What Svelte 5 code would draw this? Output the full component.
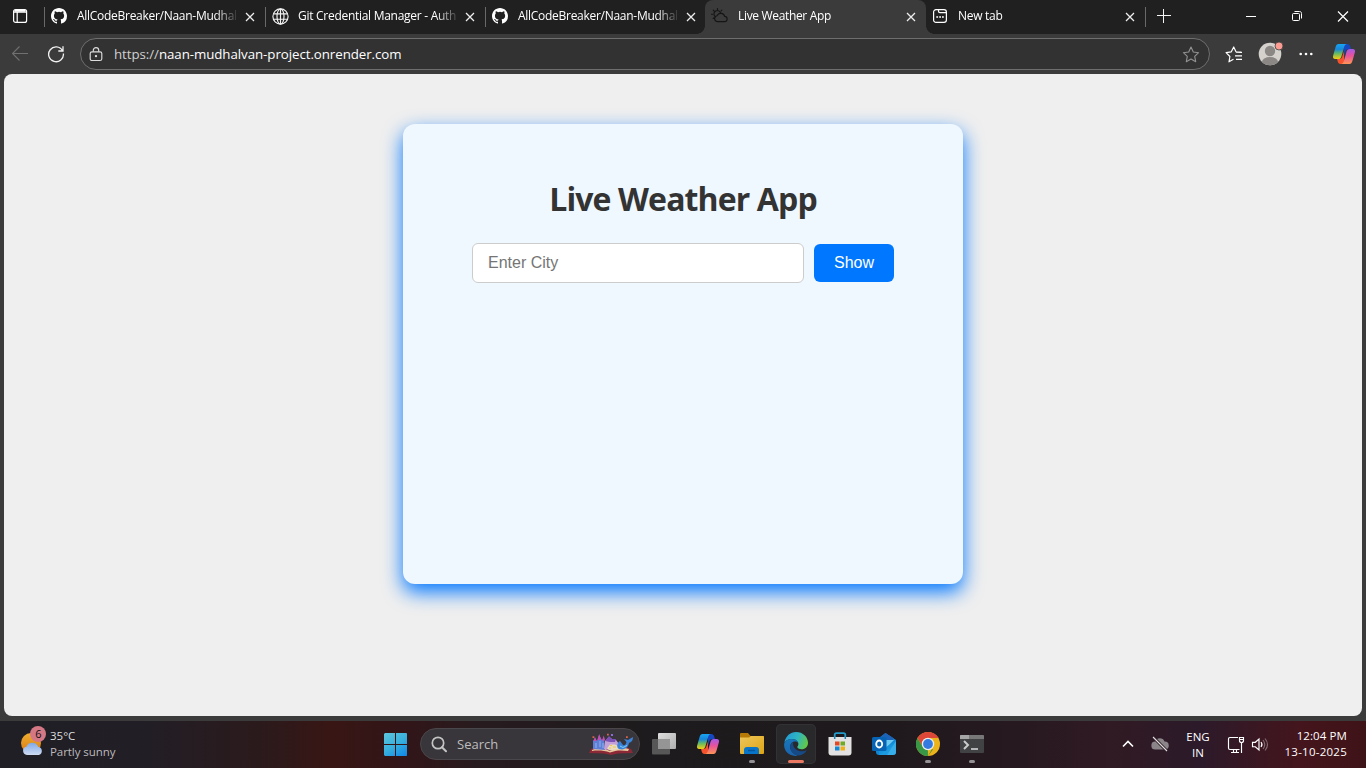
<script lang="ts">
  const tabs = [
    { icon: 'github', title: 'AllCodeBreaker/Naan-Mudhal', cls: 'repo' },
    { icon: 'globe', title: 'Git Credential Manager - Auth', cls: 'git' },
    { icon: 'github', title: 'AllCodeBreaker/Naan-Mudhal', cls: 'repo second' },
    { icon: 'weather', title: 'Live Weather App', cls: 'active' },
    { icon: 'newtab', title: 'New tab', cls: 'new' }
  ];
  let city = $state('');
</script>

{#snippet copilot(id: string)}
  <svg class="copilot" viewBox="0 0 24 24" width="24" height="24">
    <defs>
      <linearGradient id={id + 'a'} x1="0" y1="0" x2="0" y2="1">
        <stop offset="0" stop-color="#18a5f0" /><stop offset=".35" stop-color="#1788dc" />
        <stop offset=".62" stop-color="#62b866" /><stop offset="1" stop-color="#f5d010" />
      </linearGradient>
      <linearGradient id={id + 'b'} x1="0" y1="0" x2="0" y2="1">
        <stop offset="0" stop-color="#a45ae8" /><stop offset=".45" stop-color="#e8529b" />
        <stop offset="1" stop-color="#ff9455" />
      </linearGradient>
    </defs>
    <path d="M10 2h5.400c1.500 0 2.400 1.200 2.800 2.600L19 7.200h-3c-1.500 0-2.200.8-2.700 2.300l-1.300 4V5z" fill="#1747bf" />
    <path d="M14 22H8.400c-1.500 0-2.200-1-2.700-2.500L5 16.800h2.600c1.500 0 2.200-1 2.700-2.400L12 9.500V19z" fill="#f5532d" />
    <path d="M6.500 2h8.200c-1.500.3-2.100 1.500-2.600 3.200L9.400 14.400C8.900 16 7.900 17 6.300 17H3.200C1.300 17 .6 15.500 1.100 13.700L3.600 4.900C4.200 3 5 2 6.500 2z" fill="url(#{id}a)" />
    <path d="M17.500 22H9.300c1.500-.3 2.100-1.500 2.600-3.200l2.700-9.200C15.100 8 16.100 7 17.700 7h3.100c1.900 0 2.600 1.500 2.100 3.300l-2.500 8.800C19.800 21 19 22 17.500 22z" fill="url(#{id}b)" />
  </svg>
{/snippet}

<div class="screen">
  <header class="strip">
    <div class="tabmenu">
      <svg width="16" height="16" viewBox="0 0 16 16" fill="none" stroke="#fff" stroke-width="1.200">
        <rect x="1.600" y="1.600" width="13" height="12.800" rx="2" /><path d="M2 4.200h12.500M5.200 4v10" /><path d="M2.500 2.800h11" stroke-width="2" />
      </svg>
    </div>
    {#each tabs as tab}
      <div class="tab {tab.cls}">
        <span class="fav">
          {#if tab.icon === 'github'}
            <svg width="16" height="16" viewBox="0 0 16 16"><path fill="#fff" d="M8 0C3.580 0 0 3.580 0 8c0 3.540 2.290 6.530 5.470 7.590.4.070.55-.17.55-.38v-1.490c-2.010.37-2.530-.49-2.690-.94-.09-.23-.48-.94-.82-1.130-.28-.15-.68-.52-.01-.53.63-.01 1.080.58 1.230.82.72 1.210 1.870.87 2.330.66.07-.52.28-.87.51-1.070-1.780-.2-3.640-.89-3.640-3.950 0-.87.31-1.590.82-2.150-.08-.2-.36-1.020.08-2.120 0 0 .67-.21 2.200.82a7.500 7.500 0 0 1 4 0c1.530-1.040 2.200-.82 2.200-.82.44 1.100.16 1.920.08 2.120.51.56.82 1.270.82 2.150 0 3.070-1.870 3.750-3.650 3.950.29.25.54.73.54 1.480v2.200c0 .21.15.46.55.38A8 8 0 0 0 16 8c0-4.420-3.580-8-8-8z" /></svg>
          {:else if tab.icon === 'globe'}
            <svg width="17" height="17" viewBox="0 0 17 17" fill="none" stroke="#f2f2f2" stroke-width="1.150"><circle cx="8.500" cy="8.500" r="7.600" /><ellipse cx="8.500" cy="8.500" rx="3.500" ry="7.600" /><path d="M1.500 5.800h14M1.500 11.200h14M8.500 1v15" /></svg>
          {:else if tab.icon === 'weather'}
            <svg width="17" height="16" viewBox="0 0 17 16" fill="none" stroke="#151515" stroke-width="1.150" stroke-linecap="round"><path d="M6.200 13.600h7.100a2.600 2.600 0 0 0 .4-5.200 4.100 4.100 0 0 0-7.700-.7 3 3 0 0 0 .2 5.900z" /><path d="M4.200 8.600A3.400 3.400 0 1 1 9.500 4.700M6.500 .6v1M2.300 2.200l.7.8M.5 6.200h1.100M10.800 2.200l-.7.7M2.200 10.500l.6-.6" /></svg>
          {:else}
            <svg width="16" height="16" viewBox="0 0 16 16" fill="none" stroke="#fff" stroke-width="1.200"><rect x="1.600" y="1.600" width="12.800" height="12.800" rx="2.400" /><path d="M6.500 2v1.200c0 .9.500 1.400 1.400 1.400H14" /><path d="M4.300 9h1.800M7.200 9h1.800M10 9h1.800" stroke-width="1.700" /></svg>
          {/if}
        </span>
        <span class="title">{tab.title}</span>
        <svg class="close" width="10" height="10" viewBox="0 0 10 10"><path d="M1 1l8 8M9 1l-8 8" stroke="#eee" stroke-width="1.250" /></svg>
      </div>
    {/each}
    <svg class="plus" width="14" height="14" viewBox="0 0 14 14"><path d="M0 6.500h14M6.500 0v14" stroke="#f5f5f5" /></svg>
    <div class="wincontrols">
      <svg width="12" height="12" viewBox="0 0 12 12"><path d="M1 6.500h10" stroke="#fff" /></svg>
      <svg width="12" height="12" viewBox="0 0 12 12" fill="none" stroke="#fff"><rect x="1.500" y="3.500" width="7" height="7" rx="1" /><path d="M3.500 1.500h5c1.300 0 2 .7 2 2v5" /></svg>
      <svg width="12" height="12" viewBox="0 0 12 12"><path d="M1 1.500l10 10M11 1.500l-10 10" stroke="#fff" stroke-width="1.200" /></svg>
    </div>
  </header>

  <div class="toolbar">
    <svg class="back" width="17" height="16" viewBox="0 0 17 16" fill="none" stroke="#707070" stroke-width="1.100"><path d="M16 7.500H.7M7.500 .5l-7 7 7 7" /></svg>
    <svg class="reload" width="18" height="18" viewBox="0 0 18 18" fill="none" stroke="#f2f2f2" stroke-width="1.300"><path d="M15.500 5.700A7.400 7.400 0 1 0 16.400 8.500M16 1.300v4.700h-4.700" /></svg>
    <div class="address">
      <svg class="lock" width="14" height="15" viewBox="0 0 14 15" fill="none" stroke="#dcdcdc" stroke-width="1.150"><rect x="1.200" y="4.800" width="11.600" height="8.700" rx="1.800" /><path d="M4.300 4.800V3.300a2.700 2.700 0 0 1 5.400 0v1.500" /><circle cx="7" cy="9.100" r=".6" fill="#fff" /></svg>
      <span class="url"><span class="scheme">https://</span>naan-mudhalvan-project.onrender.com</span>
      <svg class="star" width="18" height="17" viewBox="0 0 18 17" fill="none" stroke="#929292" stroke-width="1.100" stroke-linejoin="round"><path d="M9 1l2.300 5 5.300.7-3.900 3.700 1 5.300L9 13.100l-4.700 2.600 1-5.300L1.400 6.700l5.300-.7z" /></svg>
    </div>
    <svg class="favs" width="18" height="17" viewBox="0 0 18 17" fill="none" stroke="#fff" stroke-width="1.200" stroke-linejoin="round"><path d="M16 6.100l-5-.3L8.700 1 6.300 5.800 1.100 6.700l3.800 3.800L4 15.800l4.500-2.500M11 6.300h6M10 9.900h7M11 13.400h6" /></svg>
    <svg class="avatar" width="26" height="26" viewBox="0 0 26 26"><defs><clipPath id="av"><circle cx="12" cy="14" r="11.300" /></clipPath></defs><circle cx="12" cy="14" r="11.300" fill="#d5d2ce" /><g clip-path="url(#av)" fill="#8b8784"><circle cx="12" cy="11" r="5.200" /><ellipse cx="12" cy="22" rx="8" ry="5" /></g><circle cx="21" cy="6" r="4" fill="#fc9d94" stroke="#3b3b3b" stroke-width=".8" /></svg>
    <svg class="dots" width="14" height="4" viewBox="0 0 14 4" fill="#fff"><circle cx="1.700" cy="2" r="1.300" /><circle cx="7" cy="2" r="1.300" /><circle cx="12.300" cy="2" r="1.300" /></svg>
    {@render copilot('top')}
  </div>

  <main class="page">
    <section class="card">
      <h1>Live Weather App</h1>
      <form onsubmit={(e) => e.preventDefault()}>
        <input type="text" placeholder="Enter City" bind:value={city} />
        <button type="submit">Show</button>
      </form>
    </section>
  </main>

  <footer class="taskbar">
    <div class="weather">
      <svg width="28" height="34" viewBox="0 0 28 34">
        <defs>
          <linearGradient id="sun" x1="0" y1="0" x2="0" y2="1"><stop offset="0" stop-color="#eeb030" /><stop offset="1" stop-color="#dc7812" /></linearGradient>
          <linearGradient id="cloud" x1="0" y1="0" x2="0" y2="1"><stop offset="0" stop-color="#80a9e8" /><stop offset="1" stop-color="#cfdcf2" /></linearGradient>
        </defs>
        <circle cx="12" cy="18" r="10" fill="url(#sun)" />
        <path d="M8 30a4.200 4.200 0 0 1-.6-8.300 6.300 6.300 0 0 1 11.700 0A4.300 4.300 0 0 1 20 30z" fill="url(#cloud)" />
        <circle cx="19" cy="9" r="8" fill="#d57885" />
        <text x="19.300" y="13" text-anchor="middle" fill="#111" font-family="Open Sans, sans-serif" font-size="11">6</text>
      </svg>
      <div class="forecast"><span class="temp">35°C</span><span class="sky">Partly sunny</span></div>
    </div>

    <div class="apps">
      <svg class="start" width="24" height="24" viewBox="0 0 24 24"><defs><linearGradient id="win" gradientUnits="userSpaceOnUse" x1="4" y1="0" x2="20" y2="24"><stop offset="0" stop-color="#58c3dc" /><stop offset=".5" stop-color="#36aede" /><stop offset="1" stop-color="#1088e8" /></linearGradient></defs><path fill="url(#win)" d="M1 0h10v11H0V1zM12 0h10.500l.5 1v10H12zM0 12h11v11H1l-1-1zM12 12h11v10.500l-.5.5H12z" /></svg>
      <div class="search">
        <svg width="16" height="17" viewBox="0 0 16 17" fill="none" stroke="#c4c4c5" stroke-width="1.700"><circle cx="7" cy="7" r="5.700" /><path d="M11 11.300l4 4" stroke-width="2" stroke-linecap="round" /></svg>
        <span>Search</span>
        <svg class="book" width="46" height="24" viewBox="0 0 46 24">
          <path d="M3 17l5-2 14 2 14-3 7 3 2 4-15 .5-7 1.500-7-1.500L1 21z" fill="#8d2837" /><path d="M4 18c6-3 13-2 18 1 7-4 12-4 19-2l-1 2c-7-1-12-1-18 1.500-6-2-12-2.500-18-1.500z" fill="#e8c9a0" />
          <path d="M5 17V9l2-3 2 3 2-6 3 5 2-2 1 12z" fill="#5f7ed6" /><path d="M9.500 8l1.800-6 1.800 6zM5.500 9l1.500-4 1.700 4zM14 8.500l1.700-5 1.500 5z" fill="#c94bb0" /><path d="M8 11v5M12 9v6M15 11v5" stroke="#9fc3f4" stroke-width=".8" />
          <path d="M16 17l1-8 4-4 3 2 4 1 3 4-1 4-8 2z" fill="#c3a0d8" /><path d="M17 9l4-5 3 3 4 0-1 3-5 0z" fill="#7d52b8" /><path d="M19 16.500l3-4 5 0 4 2 1 2.500-10 1.500z" fill="#e9dcc0" /><path d="M22 13.500h2M25 15h3M21 16h2" stroke="#f2c94e" stroke-width="1.200" />
          <path d="M31 17c-3-2-2-6 1-8l3 4c2 1 3-1 3.500-3L36 7l4 1 5-3c0 4-2 5-4 6-1 4-3 6-7 6.500z" fill="#3b83d9" /><path d="M32 14l3 1.500 4-2" stroke="#7fd0f4" fill="none" />
          <path d="M4.500 6h1.800V4.200H4.500zM19 3.500h1.800V1.700H19zM38 6h1.800V4.200H38z" fill="#d8654f" /><path d="M23 4h2V2h-2z" fill="#8a6be0" />
        </svg>
      </div>
      <div class="app"><svg width="24" height="24" viewBox="0 0 24 24"><defs><linearGradient id="tv" x1="0" y1="0" x2="1" y2="1"><stop stop-color="#dedede" /><stop offset="1" stop-color="#aeaeae" /></linearGradient></defs><rect x="6" y="1" width="18" height="16" rx="1" fill="url(#tv)" /><rect y="7" width="18" height="15.500" rx="1" fill="#5e5e5e" opacity=".9" /><path d="M6 7h12v10H6z" fill="#959595" /></svg></div>
      <div class="app">{@render copilot('bar')}</div>
      <div class="app running">
        <svg width="24" height="24" viewBox="0 0 24 24"><defs><linearGradient id="fold" x1="0" y1="0" x2="1" y2="1"><stop stop-color="#eec65b" /><stop offset="1" stop-color="#dda514" /></linearGradient></defs><path d="M0 2q0-1 1-1h7l2.500 3H23q1 0 1 1v5H0z" fill="#b77b05" /><path d="M0 5.500h9L11 4h12q1 0 1 1v16q0 1-1 1H1q-1 0-1-1z" fill="url(#fold)" /><path d="M4 22v-4q0-3 3-3h9q3 0 3 3v4z" fill="#0975c8" /><path d="M8 18.500h7" stroke="#06569e" stroke-width="1.500" /></svg>
      </div>
      <div class="app current">
        <svg width="24" height="24" viewBox="0 0 24 24">
          <defs>
            <linearGradient id="eg" x1="0" y1=".3" x2="1" y2=".6"><stop stop-color="#239ad3" /><stop offset=".5" stop-color="#2eb5c3" /><stop offset="1" stop-color="#64c942" /></linearGradient>
            <linearGradient id="eb" x1="0" y1="0" x2="0" y2="1"><stop stop-color="#1777ba" /><stop offset="1" stop-color="#1a63ad" /></linearGradient>
          </defs>
          <path d="M.4 10.400C1.500 4.200 6.300 0 12 0c7 0 12 5 12 10.800 0 4-2.800 6.500-6.300 6.500-2.900 0-4.400-1.100-4.400-2.200 0-1 1.100-1.400 1.100-3.200C14.400 9.300 11.600 7 8 7 4.500 7 1.700 8.300.4 10.400z" fill="url(#eg)" />
          <path d="M.2 11.500C1 8.600 4.300 7 8 7c3 0 5.700 1.600 6.300 4-1-1.100-2.300-1.500-3.300-1.500-3 0-4.800 2.400-4.800 5.500 0 4 3.300 7.200 7.300 8.700C5.700 25-.8 19.200.2 11.500z" fill="url(#eb)" />
          <path d="M9.300 10c-2.500 1.200-3.100 3.100-3.100 5 0 4.600 4.500 8.700 8.600 8.500 3.600-.5 6.700-2.800 8.100-5.600-2.200 1.300-4.800 1.600-7.300 1.100-4.600-1-7.300-4.700-6.300-9z" fill="#164a86" />
        </svg>
      </div>
      <div class="app">
        <svg width="24" height="24" viewBox="0 0 24 24"><path d="M6.700 7V3q0-1.800 1.800-1.800h7Q17.300 1.200 17.300 3v4" fill="none" stroke="#239ccb" stroke-width="1.800" /><path d="M.5 5h23v15.500q0 3-3 3h-17q-3 0-3-3z" fill="#e3e1e2" /><path d="M6.700 7V4.500M17.300 7V4.500" stroke="#1d83b1" stroke-width="1.500" /><path d="M7 9.500h4.500v4H7z" fill="#e34824" /><path d="M12.500 9.500H17v4h-4.500z" fill="#70a923" /><path d="M7 14.500h4.500v4H7z" fill="#1687d4" /><path d="M12.500 14.500H17v4h-4.500z" fill="#f0b017" /></svg>
      </div>
      <div class="app">
        <svg width="24" height="24" viewBox="0 0 24 24"><path d="M3 9l10.500-8L24 8v12q0 3-3 3H7q-3 0-3-3z" fill="#1485d2" /><path d="M7 6l6.500-5L22 6.500 14 16z" fill="#1c62b7" /><path d="M10 8h12l-8 8z" fill="#6ac9f1" /><path d="M24 9v11q0 3-3 3H7l13-9z" fill="#37ade9" /><path d="M24 9L7 19v4h8z" fill="#1596dd" opacity=".8" /><rect y="5" width="14.500" height="14" rx="1.500" fill="#0764b5" /><ellipse cx="7.200" cy="12" rx="3" ry="3.500" fill="none" stroke="#fff" stroke-width="1.800" /></svg>
      </div>
      <div class="app running">
        <svg width="24" height="24" viewBox="0 0 24 24"><circle cx="12" cy="12" r="12" fill="#edb31b" /><path d="M1.600 6A12 12 0 0 1 22.400 6H12a6 6 0 0 0-5.200 9z" fill="#dc4739" /><path d="M1.600 6l5.200 9A6 6 0 0 0 15 17.200h2.200L12 24A12 12 0 0 1 1.600 6z" fill="#389747" /><path d="M17.200 15L12 24l-.1-6z" fill="#edb31b" /><circle cx="12" cy="12" r="6.200" fill="#e9edf0" /><circle cx="12" cy="12" r="4.900" fill="#347ae0" /></svg>
      </div>
      <div class="app running">
        <svg width="24" height="24" viewBox="0 0 24 24"><rect y="3" width="24" height="18" rx="1" fill="#414243" /><path d="M0 7V4q0-1 1-1h22q1 0 1 1v3z" fill="#777" /><path d="M0 7V4q0-1 1-1h8v4z" fill="#a5a5a5" /><path d="M4 9l4 4-4 4" stroke="#cbcbcb" stroke-width="2" fill="none" /><path d="M11 17h7" stroke="#ddd" stroke-width="1.500" /></svg>
      </div>
    </div>

    <div class="tray">
      <svg class="chev" width="12" height="8" viewBox="0 0 12 8" fill="none" stroke="#fff" stroke-width="1.600"><path d="M1 6.500l5-5 5 5" /></svg>
      <svg class="drive" width="18" height="16" viewBox="0 0 18 16"><path d="M4.500 13.500a4 4 0 0 1-.3-8 5 5 0 0 1 9.300 0 4 4 0 0 1 .5 8z" fill="#8b8489" /><path d="M2 1l14 14" stroke="#30202a" stroke-width="3" /><path d="M2 1l14 14" stroke="#e3dfe1" stroke-width="1.100" /></svg>
      <div class="lang"><span>ENG</span><span>IN</span></div>
      <svg class="net" width="18" height="18" viewBox="0 0 18 18" fill="none" stroke="#fff" stroke-width="1.150"><path d="M11 1.500H3Q1.500 1.500 1.500 3v9q0 1.500 1.500 1.500h9.500M6.500 13.500V16M9.500 13.500V16M4 16.500h8M12.500 1.500h4v3q0 2-2 2t-2-2zM14.500 6.500V17M12.500 3.500h4" /></svg>
      <svg class="sound" width="18" height="16" viewBox="0 0 18 16" fill="none" stroke="#fff" stroke-width="1.150"><path d="M1.500 5.300h2.800L8 2v11l-3.700-3.300H1.500z" /><path d="M10 5q2 2.500 0 5" /><path d="M12 3q3.500 4.500 0 9M14 1.500q5 6 0 12" stroke="#806b70" /></svg>
      <div class="clock"><span class="time">12:04 PM</span><span class="date">13-10-2025</span></div>
    </div>
  </footer>
</div>

<style>
  :global(body) { margin: 0; overflow: hidden; background: #3b3b3b; }
  * { box-sizing: border-box; }
  svg { display: block; flex: none; }
  .screen { width: 1366px; height: 768px; display: flex; flex-direction: column; background: #3b3b3b; font-family: "Open Sans", "Noto Sans", sans-serif; font-size: 12px; color: #fff; overflow: hidden; }

  .strip { height: 34px; background: #202020; display: flex; flex: none; }
  .tabmenu { width: 45px; flex: none; padding: 8px 0 0 12px; }
  .tab { width: 220px; flex: none; height: 34px; display: flex; align-items: center; padding: 0 0 2px 6px; position: relative; }
  .tab::before { content: ""; position: absolute; left: -1px; top: 7px; width: 1px; height: 20px; background: #696969; }
  .tab.git { padding-left: 7px; }
  .tab.git::before, .tab.second::before { left: 0; }
  .tab.second { padding-left: 7px; }
  .tab.active::before, .tab.new::before { content: none; }
  .tab.active { width: 221px; background: #3b3b3b; border-radius: 8px 8px 0 0; }
  .tab.active::after { content: ""; position: absolute; left: -8px; right: -8px; bottom: 0; height: 8px; background: radial-gradient(circle at 0 0, transparent 7.500px, #3b3b3b 8px) left / 8px 8px no-repeat, radial-gradient(circle at 100% 0, transparent 7.500px, #3b3b3b 8px) right / 8px 8px no-repeat; }
  .tab.new::after { content: ""; position: absolute; right: 0; top: 7px; height: 20px; width: 1px; background: #696969; }
  .fav { width: 26px; flex: none; }
  .title { flex: none; width: 162px; margin-right: 6px; white-space: nowrap; line-height: 18px; letter-spacing: -.28px; -webkit-mask-image: linear-gradient(90deg, #000 138px, transparent 162px); mask-image: linear-gradient(90deg, #000 138px, transparent 162px); }
  .git .title { margin-right: 5px; }
  .active .title { margin-left: 1px; letter-spacing: -.33px; }
  .new .title { margin-right: 5px; }
  .close { margin-top: 1px; }
  .plus { margin: 9px 0 0 11px; }
  .wincontrols { margin-left: auto; display: flex; gap: 34px; padding: 10px 17px 0 0; }

  .toolbar { height: 40px; flex: none; display: flex; align-items: center; padding-left: 12px; }
  .back { margin-right: 18px; }
  .reload { margin-right: 15px; }
  .address { width: 1130px; height: 32px; flex: none; border: 1px solid #6e6e6e; border-radius: 16px; background: #323232; display: flex; align-items: center; padding: 0 9px 0 8px; }
  .lock { margin-right: 11px; }
  .url { font-size: 13.300px; letter-spacing: -.06px; line-height: 20px; }
  .scheme { color: #d0d0d0; }
  .star { margin-left: auto; }
  .favs { margin-left: 15px; }
  .avatar { margin: 0 0 2px 15px; }
  .dots { margin-left: 15px; margin-right: 19px; }

  .page { height: 642px; flex: none; margin: 0 4px; background: #efefef; border-radius: 8px; display: flex; justify-content: center; align-items: flex-start; padding-top: 50px; }
  .card { width: 560px; height: 460px; border-radius: 12px; background: #eff7ff; box-shadow: 0 8px 20px #0077ff; padding-top: 53px; text-align: center; }
  h1 { margin: 0 0 23px; color: #333; font-size: 32px; line-height: 43px; font-weight: 700; letter-spacing: -.88px; white-space: nowrap; }
  form { display: flex; justify-content: center; align-items: center; gap: 10px; }
  input { width: 332px; height: 40px; padding: 0 15px; border: 1px solid #ccc; border-radius: 6px; background: #fff; font: 16px "Liberation Sans", Arial, sans-serif; color: #333; outline: none; }
  input::placeholder { color: #757575; }
  button { width: 80px; height: 38px; border: 0; border-radius: 6px; background: #07f; color: #fff; padding: 0; font: 16px "Liberation Sans", Arial, sans-serif; }

  .taskbar { height: 47px; margin-top: 5px; flex: none; display: flex; background: linear-gradient(90deg, #201f26 0, #221e25 150px, #2b1a1c 260px, #381614 330px, #321518 400px, #271b1f 480px, #1d1b1d 650px, #1e191c 880px, #261920 1010px, #301a23 1110px, #2c1a2a 1200px, #44151c 1300px, #3e1318 100%); }
  .weather { width: 384px; flex: none; display: flex; padding: 4px 0 0 19px; }
  .forecast { display: flex; flex-direction: column; padding-top: 3px; margin-left: 3px; color: #dedede; font-size: 11.500px; line-height: 16px; }
  .sky { color: #bdbabc; letter-spacing: -.06px; }
  .apps { display: flex; flex: none; width: 612px; align-items: flex-start; }
  .start { margin: 12px 12px 0 0; }
  .search { width: 220px; height: 32px; flex: none; margin: 7px 4px 0 0; border-radius: 16px; border: 1px solid #4b4649; background: #38363a; display: flex; align-items: center; padding: 0 5px 0 10px; color: #bdbdbe; font-size: 13px; }
  .search span { margin-left: 10px; }
  .book { margin-left: auto; }
  .app { width: 40px; height: 40px; margin: 3px 4px 0 0; display: flex; align-items: center; justify-content: center; position: relative; flex: none; border-radius: 5px; }
  .current { background: #29282a; box-shadow: inset 0 0 0 1px #323133; }
  .running::after, .current::after { content: ""; position: absolute; bottom: 1px; left: 17px; width: 6px; height: 3px; border-radius: 2px; background: #949294; }
  .current::after { left: 12px; width: 16px; background: #ea7862; }
  .tray { flex: 1; display: flex; align-items: center; padding-left: 126px; }
  .chev { margin: 0 17px 1px 0; }
  .drive { margin: 0 14px 1px 0; }
  .lang { width: 30px; display: flex; flex-direction: column; text-align: center; font-size: 11.500px; line-height: 16px; padding-top: 1px; }
  .net { margin-left: 14px; }
  .sound { margin-left: 6px; }
  .clock { margin-left: auto; padding: 0 19px 1px 0; display: flex; flex-direction: column; align-items: flex-end; font-size: 11.500px; line-height: 16px; }
  .time { letter-spacing: .1px; }
  .date { letter-spacing: .25px; }
</style>
